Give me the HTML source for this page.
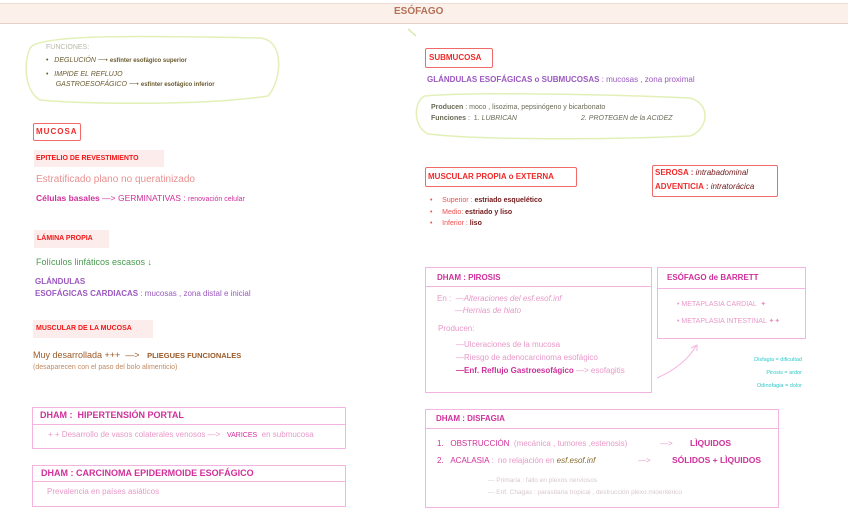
<!DOCTYPE html>
<html><head><meta charset="utf-8"><style>
body{margin:0;width:848px;height:530px;background:#fff;position:relative;overflow:hidden;font-family:"Liberation Sans",sans-serif;}
.a{position:absolute;white-space:nowrap;}
.hdr{position:absolute;left:0;top:3px;width:848px;height:19px;background:#fbf0ea;border-top:1px solid #ecdcd4;border-bottom:1px solid #e4d0c6;}
.rb{position:absolute;border:1.5px solid #f06a6a;border-radius:2px;color:#f02a2a;font-weight:bold;font-size:8px;}
.lb{position:absolute;background:#fdecec;color:#f01818;font-weight:bold;font-size:7px;}
.pb{position:absolute;border:1.5px solid #f4b4e0;}
.pl{position:absolute;left:0;right:0;border-top:1.5px solid #f4b4e0;}
.mg{color:#d0309a;}
.lp{color:#e898c8;}
</style></head><body>
<div class="hdr"></div>
<div class="a" style="left:394px;top:6px;font-size:10px;font-weight:bold;color:#b57258;">ESÓFAGO</div>
<svg class="a" style="left:0;top:0" width="848" height="530">
<path d="M32 46 C50 34,150 36,260 38 C285 40,282 80,268 96 C200 106,80 104,40 100 C22 90,24 54,32 46Z" fill="none" stroke="#e2f0b8" stroke-width="1.5"/>
<path d="M425 96 C470 92,600 94,690 98 C712 104,708 130,690 136 C600 140,480 140,428 134 C412 126,414 100,425 96Z" fill="none" stroke="#e2f0b8" stroke-width="1.5"/>
<path d="M408 29 L416 36" stroke="#d8ecb0" stroke-width="1.5"/>
<path d="M657 378 C675 370,688 360,696 346" fill="none" stroke="#f4b4e0" stroke-width="1"/>
<path d="M691 348 L697 345 L697 351" fill="none" stroke="#f4b4e0" stroke-width="1"/>
</svg>
<div class="a" style="left:46px;top:44px;font-size:7px;color:#b8b8a8;">FUNCIONES:</div>
<div class="a" style="left:46px;top:56px;font-size:7px;color:#6a5a30;">•&nbsp;&nbsp;&nbsp;<i>DEGLUCIÓN</i> ⟶ <b style="font-size:6px">esfínter esofágico superior</b></div>
<div class="a" style="left:46px;top:70px;font-size:7px;color:#6a5a30;line-height:10px;">•&nbsp;&nbsp;&nbsp;<i>IMPIDE EL REFLUJO</i><br>&nbsp;&nbsp;&nbsp;&nbsp;&nbsp;<i>GASTROESOFÁGICO</i> ⟶ <b style="font-size:6px">esfínter esofágico inferior</b></div>
<div class="rb" style="left:33px;top:123px;width:44px;height:16px;line-height:16px;padding-left:2px;letter-spacing:1px;">MUCOSA</div>
<div class="lb" style="left:34px;top:150px;width:128px;height:17px;line-height:17px;padding-left:2px;">EPITELIO DE REVESTIMIENTO</div>
<div class="a" style="left:36px;top:174px;font-size:10px;color:#e89090;">Estratificado plano no queratinizado</div>
<div class="a mg" style="left:36px;top:193px;font-size:8.5px;"><b>Células basales</b> —&gt; GERMINATIVAS : <span style="font-size:7px">renovación celular</span></div>
<div class="lb" style="left:34px;top:230px;width:72px;height:18px;line-height:18px;padding-left:3px;">LÁMINA PROPIA</div>
<div class="a" style="left:36px;top:257px;font-size:9px;color:#4a9a50;">Folículos linfáticos escasos ↓</div>
<div class="a" style="left:35px;top:276px;font-size:8px;color:#9b59c0;font-weight:bold;line-height:12px;">GLÁNDULAS<br>ESOFÁGICAS CARDIACAS <span style="font-weight:normal">: mucosas , zona distal e inicial</span></div>
<div class="lb" style="left:33px;top:320px;width:117px;height:18px;line-height:18px;padding-left:3px;">MUSCULAR DE LA MUCOSA</div>
<div class="a" style="left:33px;top:350px;font-size:9px;color:#9a5a28;">Muy desarrollada +++ &nbsp;—&gt; &nbsp;&nbsp;<b style="font-size:7.5px">PLIEGUES FUNCIONALES</b></div>
<div class="a" style="left:33px;top:364px;font-size:7px;color:#c08a60;">(desaparecen con el paso del bolo alimenticio)</div>
<div class="pb" style="left:32px;top:407px;width:312px;height:40px;"><div class="pl" style="top:16px"></div></div>
<div class="a mg" style="left:40px;top:410px;font-size:9px;font-weight:bold;">DHAM : &nbsp;HIPERTENSIÓN PORTAL</div>
<div class="a lp" style="left:48px;top:430px;font-size:8px;">+ + Desarrollo de vasos colaterales venosos —&gt; &nbsp;&nbsp;<span class="mg" style="font-size:7px">VARICES</span> &nbsp;en submucosa</div>
<div class="pb" style="left:32px;top:465px;width:312px;height:40px;"><div class="pl" style="top:15px"></div></div>
<div class="a mg" style="left:41px;top:468px;font-size:9px;font-weight:bold;">DHAM : CARCINOMA EPIDERMOIDE ESOFÁGICO</div>
<div class="a lp" style="left:47px;top:487px;font-size:8px;">Prevalencia en países asiáticos</div>

<div class="rb" style="left:425px;top:48px;width:63px;height:18px;line-height:18px;padding-left:3px;">SUBMUCOSA</div>
<div class="a" style="left:427px;top:75px;font-size:8px;color:#9b59c0;"><b>GLÁNDULAS ESOFÁGICAS o SUBMUCOSAS</b> : mucosas , zona proximal</div>
<div class="a" style="left:431px;top:104px;font-size:7px;color:#6a6a58;"><b>Producen</b> : moco , lisozima, pepsinógeno y bicarbonato</div>
<div class="a" style="left:431px;top:115px;font-size:7px;color:#6a6a58;"><b>Funciones</b> : &nbsp;1. <i>LUBRICAN</i></div>
<div class="a" style="left:581px;top:115px;font-size:7px;color:#6a6a58;"><i>2. PROTEGEN de la ACIDEZ</i></div>
<div class="rb" style="left:425px;top:167px;width:148px;height:18px;line-height:18px;padding-left:2px;">MUSCULAR PROPIA o EXTERNA</div>
<div class="a" style="left:430px;top:195px;font-size:7px;color:#f05050;line-height:11.5px;">•&nbsp;&nbsp;&nbsp;&nbsp;&nbsp;Superior : <b style="color:#701818">estriado esquelético</b><br>•&nbsp;&nbsp;&nbsp;&nbsp;&nbsp;Medio: <b style="color:#701818">estriado y liso</b><br>•&nbsp;&nbsp;&nbsp;&nbsp;&nbsp;Inferior : <b style="color:#701818">liso</b></div>
<div class="rb" style="left:652px;top:165px;width:122px;height:30px;padding-left:2px;line-height:14px;font-size:8px;">SEROSA : <i style="font-weight:normal;color:#701818">intrabadominal</i><br>ADVENTICIA : <i style="font-weight:normal;color:#701818">intratorácica</i></div>

<div class="pb" style="left:425px;top:267px;width:225px;height:124px;"><div class="pl" style="top:18px"></div></div>
<div class="a mg" style="left:437px;top:273px;font-size:8px;font-weight:bold;">DHAM : PIROSIS</div>
<div class="a lp" style="left:437px;top:293px;font-size:8px;line-height:12px;">En : &nbsp;—<i>Alteraciones del esf.esof.inf</i><br>&nbsp;&nbsp;&nbsp;&nbsp;&nbsp;&nbsp;&nbsp;&nbsp;—<i>Hernias de hiato</i></div>
<div class="a lp" style="left:438px;top:324px;font-size:8px;">Producen:</div>
<div class="a lp" style="left:456px;top:338px;font-size:8px;line-height:13px;">—Ulceraciones de la mucosa<br>—Riesgo de adenocarcinoma esofágico<br><span class="mg"><b>—Enf. Reflujo Gastroesofágico</b></span> —&gt; esofagitis</div>
<div class="pb" style="left:657px;top:267px;width:147px;height:70px;"><div class="pl" style="top:20px"></div></div>
<div class="a mg" style="left:667px;top:273px;font-size:8px;font-weight:bold;">ESÓFAGO de BARRETT</div>
<div class="a lp" style="left:677px;top:296px;font-size:7px;line-height:17px;">• METAPLASIA CARDIAL &nbsp;✦<br>• METAPLASIA INTESTINAL ✦✦</div>
<div class="a" style="left:700px;top:354px;width:102px;text-align:right;font-size:5.5px;color:#30c8c8;line-height:13px;">Disfagia = dificultad<br>Pirosis = ardor<br>Odinofagia = dolor</div>

<div class="pb" style="left:425px;top:409px;width:352px;height:97px;"><div class="pl" style="top:18px"></div></div>
<div class="a mg" style="left:436px;top:414px;font-size:8px;font-weight:bold;">DHAM : DISFAGIA</div>
<div class="a lp" style="left:437px;top:439px;font-size:8px;"><span class="mg">1. &nbsp;&nbsp;OBSTRUCCIÓN</span> &nbsp;(mecánica , tumores ,estenosis)</div>
<div class="a lp" style="left:437px;top:456px;font-size:8px;"><span class="mg">2. &nbsp;&nbsp;ACALASIA</span> : &nbsp;no relajación en <i style="color:#8a6a30">esf.esof.inf</i></div>
<div class="a lp" style="left:660px;top:439px;font-size:8px;">—&gt;</div>
<div class="a lp" style="left:638px;top:456px;font-size:8px;">—&gt;</div>
<div class="a mg" style="left:690px;top:438px;font-size:8.5px;font-weight:bold;">LÌQUIDOS</div>
<div class="a mg" style="left:672px;top:455px;font-size:8.5px;font-weight:bold;">SÓLIDOS + LÌQUIDOS</div>
<div class="a" style="left:488px;top:475px;font-size:6.5px;color:#d8c8cc;line-height:12px;">— Primaria : fallo en plexos nerviosos<br>— Enf. Chagas : parasitaria tropical , destrucción plexo mioentérico</div>
</body></html>
